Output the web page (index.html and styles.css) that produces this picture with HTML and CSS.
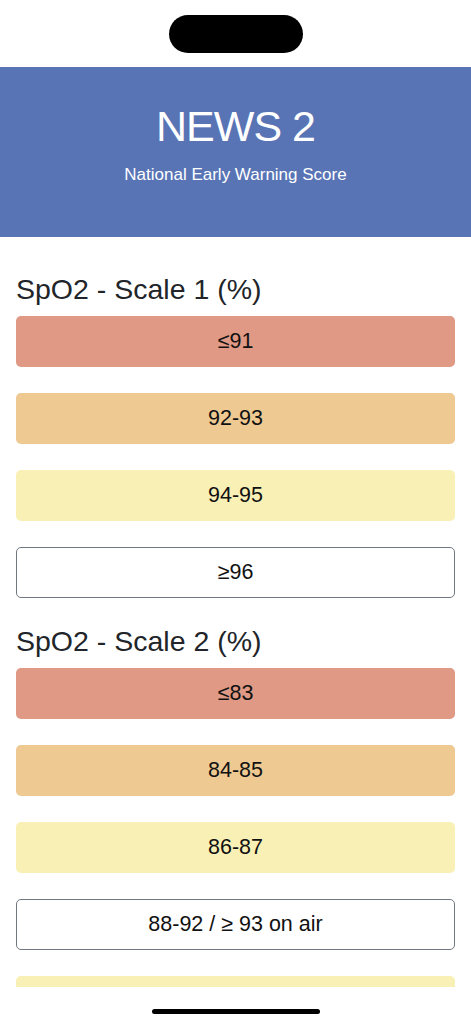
FILE: index.html
```html
<!DOCTYPE html>
<html lang="en">
<head>
<meta charset="utf-8">
<title>NEWS 2</title>
<link rel="stylesheet" href="styles.css">
</head>
<body>
<div class="screen">
  <div class="status-bar"><div class="island"></div></div>
  <header class="hero">
    <h1 class="hero-title">NEWS 2</h1>
    <p class="hero-sub">National Early Warning Score</p>
  </header>
  <main class="content">
    <section class="group">
      <h2 class="group-title">SpO2 - Scale 1 (%)</h2>
      <div class="opt opt-red">≤91</div>
      <div class="opt opt-orange">92-93</div>
      <div class="opt opt-yellow">94-95</div>
      <div class="opt opt-plain">≥96</div>
    </section>
    <section class="group">
      <h2 class="group-title">SpO2 - Scale 2 (%)</h2>
      <div class="opt opt-red">≤83</div>
      <div class="opt opt-orange">84-85</div>
      <div class="opt opt-yellow">86-87</div>
      <div class="opt opt-plain">88-92 / ≥ 93 on air</div>
      <div class="opt opt-yellow"></div>
    </section>
  </main>
  <div class="home-bar"><div class="home-indicator"></div></div>
</div>
</body>
</html>
```
FILE: styles.css
```css
* { box-sizing: border-box; }
html, body { margin: 0; padding: 0; background: #fff; }
body { font-family: "Liberation Sans", Arial, sans-serif; color: #212529; }

.screen {
  width: 471px;
  height: 1024px;
  display: flex;
  flex-direction: column;
  overflow: hidden;
}

.status-bar {
  height: 67px;
  flex: 0 0 67px;
  display: flex;
  justify-content: center;
  padding-top: 15px;
  background: #fff;
}
.island {
  width: 134px;
  height: 38px;
  border-radius: 19px;
  background: #000;
}

.hero {
  flex: 0 0 170px;
  background: #5874b5;
  color: #fff;
  text-align: center;
  padding-top: 32px;
}
.hero-title {
  margin: 0;
  font-size: 43px;
  line-height: 54px;
  font-weight: 400;
  letter-spacing: -1px;
}
.hero-sub {
  margin: 12px 0 0;
  font-size: 17px;
  line-height: 20px;
}

.content {
  flex: 1 1 auto;
  overflow: hidden;
  padding: 35px 16px 0;
}
.group-title {
  margin: 0 0 10px;
  font-size: 28.5px;
  line-height: 34px;
  font-weight: 400;
  color: #212529;
}
.opt {
  height: 51px;
  margin-bottom: 26px;
  border-radius: 5px;
  display: flex;
  align-items: center;
  justify-content: center;
  font-size: 21.5px;
  color: #111;
}
.opt-red { background: #df9984; }
.opt-orange { background: #eec992; }
.opt-yellow { background: #f9f0b5; }
.opt-plain { background: #fff; border: 1px solid #6f7780; }

.home-bar {
  flex: 0 0 37px;
  background: #fff;
  display: flex;
  justify-content: center;
  padding-top: 22px;
}
.home-indicator {
  width: 168px;
  height: 5px;
  border-radius: 3px;
  background: #000;
}
```
